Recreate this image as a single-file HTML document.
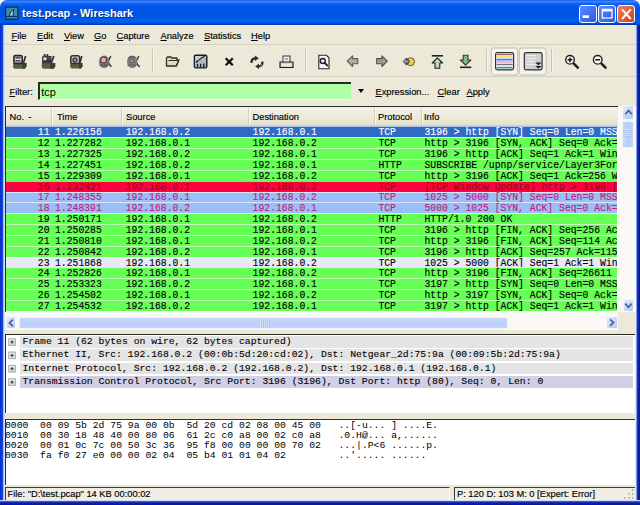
<!DOCTYPE html>
<html><head><meta charset="utf-8">
<style>
*{box-sizing:border-box}
html,body{margin:0;padding:0}
body{width:640px;height:505px;overflow:hidden;position:relative;background:#F4F4F4;font-family:"Liberation Sans",sans-serif;color:#000}
.a{position:absolute}
#title{left:0;top:0;width:640px;height:25px;background:linear-gradient(#1450D8 0,#3C8EFF 1.2px,#2A7CFF 2px,#0A60F4 4px,#0056E6 7px,#0052E0 14px,#005AE8 18px,#0062F0 21px,#0050DC 23px,#0034B8 25px);border-radius:7px 7px 0 0}
#ttext{left:22px;top:8px;color:#fff;font-weight:bold;font-size:11px;line-height:11px;white-space:nowrap;text-shadow:1px 1px 0 #0A2A8A}
.tb{top:5px;width:18px;height:18px;border:1px solid #fff;border-radius:3px}
#client{left:5px;top:25px;width:630px;height:475px;background:#ECE9D8}
.mt{top:30.3px;font-size:9.3px;line-height:12px;white-space:nowrap;-webkit-text-stroke:0.15px currentColor}
.u{text-decoration:underline;text-underline-offset:0.6px;text-decoration-thickness:1px}
.vsep{width:2px;border-left:1px solid #C8C5B6;border-right:1px solid #F6F5F0}
.mono{font-family:"Liberation Mono",monospace}
.prow{left:6px;width:611px;padding-top:0.95px;font-family:"Liberation Mono",monospace;font-size:9.76px;line-height:10.5px;-webkit-text-stroke:0.12px currentColor;white-space:pre;overflow:hidden}
.prow span{position:absolute;top:0.95px;transform:scaleY(1.15);transform-origin:0 1px}
.prow:before{content:"";position:absolute;left:0;right:0;top:0;height:1px;background:rgba(255,255,255,0.6)}
.hd{top:106px;height:19.5px;font-size:9.3px;line-height:12px;padding-top:5px;white-space:nowrap;-webkit-text-stroke:0.15px currentColor}
.drow{left:20px;width:613px;height:11.7px;padding-left:2.5px;font-family:"Liberation Mono",monospace;font-size:9.76px;line-height:12px;white-space:pre;overflow:hidden;-webkit-text-stroke:0.1px currentColor}
.exp{width:7.5px;height:7.5px;border:1px solid #9CA6BE;background:linear-gradient(135deg,#F8F8F4,#DCD8CC);}
.exp:before{content:"";position:absolute;left:1px;top:2.35px;width:3.5px;height:0.8px;background:#202020}
.exp:after{content:"";position:absolute;left:2.35px;top:1px;width:0.8px;height:3.5px;background:#202020}
.hex{left:5px;font-family:"Liberation Mono",monospace;font-size:9.76px;line-height:10.07px;white-space:pre}
.sbtn{background:linear-gradient(135deg,#E4ECFE,#C0D2F8 70%,#B4C8F4);border:1px solid #F2F6FF;border-radius:2px}
.sthumb{border:1px solid #EEF2FE;border-radius:2px}
</style></head><body>
<div class="a" style="left:0;top:8px;width:640px;height:497px;background:#0838D8"></div>
<div class="a" style="left:0;top:20px;width:5px;height:485px;background:linear-gradient(90deg,#0A2CC4 0,#0A3CDC 1.5px,#1448E0 2.6px,#90B4F2 3.4px,#D8E4F8 4.4px,#D8E4F8 5px)"></div>
<div class="a" style="left:635px;top:20px;width:5px;height:485px;background:linear-gradient(90deg,#E8F0FC 0,#C8D8F8 1.2px,#3050D0 1.9px,#1430B8 2.6px,#0A24A8 3.4px,#001890 5px)"></div>
<div class="a" style="left:0;top:500px;width:640px;height:5px;background:linear-gradient(#E0EEFA 0,#C0D0F4 0.8px,#3048C8 1.6px,#1424B0 2.6px,#001890 5px)"></div>
<div id="title" class="a"></div>
<div id="ttext" class="a">test.pcap - Wireshark</div>
<div class="a tb" style="left:579px;background:linear-gradient(135deg,#5A8AFF,#2A5AE8)"></div>
<div class="a tb" style="left:598px;background:linear-gradient(135deg,#5A8AFF,#2A5AE8)"></div>
<div class="a tb" style="left:617px;background:linear-gradient(135deg,#F08060,#D0401A)"></div>

<div id="client" class="a"></div>
<div class="a" style="left:4px;top:25px;width:632px;height:1px;background:#E4EEF8"></div>
<!-- menu -->
<div class="a" style="left:4px;top:44px;width:632px;height:1px;background:#D6D2C2"></div>
<div class="a mt" style="left:11.5px"><span class="u">F</span>ile</div>
<div class="a mt" style="left:37px"><span class="u">E</span>dit</div>
<div class="a mt" style="left:64px"><span class="u">V</span>iew</div>
<div class="a mt" style="left:94px"><span class="u">G</span>o</div>
<div class="a mt" style="left:116.5px"><span class="u">C</span>apture</div>
<div class="a mt" style="left:160.5px"><span class="u">A</span>nalyze</div>
<div class="a mt" style="left:204px"><span class="u">S</span>tatistics</div>
<div class="a mt" style="left:251px"><span class="u">H</span>elp</div>

<!-- toolbar -->
<div class="a" style="left:4px;top:76px;width:632px;height:1px;background:#D6D2C2"></div>
<div class="a vsep" style="left:152px;top:48.5px;height:23px"></div>
<div class="a vsep" style="left:304.5px;top:48.5px;height:23px"></div>
<div class="a vsep" style="left:485.5px;top:48.5px;height:23px"></div>
<div class="a vsep" style="left:550.5px;top:48.5px;height:23px"></div>

<svg class="a" style="left:0;top:0" width="640" height="80" viewBox="0 0 640 80">
<!-- title icon -->
<rect x="5.6" y="7.1" width="12.2" height="12.3" fill="#3A9096" stroke="#0A2C5C" stroke-width="1.2"/>
<path d="M9 16.2 Q10 11 13.8 9.4 Q12.8 12.2 13.4 16.2 Z" fill="#90C8F0" stroke="#0A2A5A" stroke-width="0.9"/>
<line x1="5.5" y1="16.5" x2="18" y2="16.5" stroke="#0A2A6A" stroke-width="0.9"/>
<line x1="7" y1="19.2" x2="16" y2="19.2" stroke="#0A2A6A" stroke-width="0.9"/>
<!-- 1 interfaces -->
<g>
<path d="M23.4 63.3 L25.6 56" stroke="#303030" stroke-width="1.7"/>
<path d="M13.2 63 H26.4 V66.5 L24.8 68.8 H14.6 L13.2 67.2 Z" fill="#55603A"/>
<path d="M22.6 63 H26.4 V66.5 L24.8 68.8 H22.6 Z" fill="#383F2A"/>
<rect x="13.9" y="55.6" width="8.3" height="7.8" rx="1.4" fill="#D8D8E0" stroke="#262630" stroke-width="1.6"/>
<path d="M15.4 57.9 H20.6 M15.4 60.9 H20.6" stroke="#262630" stroke-width="1.3"/>
</g>
<!-- 2 options -->
<g>
<path d="M51.2 63.3 L53.8 56" stroke="#303030" stroke-width="1.8"/>
<path d="M41.8 63 H55.2 V66.5 L53.6 68.8 H43.2 L41.8 67.2 Z" fill="#55603A"/>
<path d="M50.4 63 H55.2 V66.5 L53.6 68.8 H50.4 Z" fill="#383F2A"/>
<path d="M42 57.5 Q42 56 43.5 56 H51.5 V63.2 H42 Z" fill="#3A3A3A"/>
<rect x="43.4" y="57.4" width="3" height="2.8" fill="#E8E8E4"/>
<circle cx="44.6" cy="55.2" r="1.1" fill="#303030"/>
<circle cx="47.4" cy="55.2" r="1.1" fill="#303030"/>
<path d="M47.5 58 H50.5" stroke="#707070" stroke-width="1"/>
</g>
<!-- 3 start -->
<g>
<path d="M79.8 63.3 L81.8 56" stroke="#303030" stroke-width="1.7"/>
<path d="M70.2 63 H82.4 V66.5 L80.8 68.6 H71.6 L70.2 67.2 Z" fill="#55603A"/>
<path d="M79 63 H82.4 V66.5 L80.8 68.6 H79 Z" fill="#383F2A"/>
<rect x="70.8" y="55.7" width="8.8" height="7.8" rx="2" fill="#DCDCDC" stroke="#303030" stroke-width="1.6"/>
<circle cx="75" cy="60" r="2.2" fill="#8A8A8A" stroke="#303030" stroke-width="1.1"/>
</g>
<!-- 4 stop -->
<g>
<path d="M107.6 62.5 L110.8 56.2 M107.8 62.3 L111.4 66.8" stroke="#404040" stroke-width="1.6"/>
<ellipse cx="104.2" cy="61.8" rx="5.2" ry="6.3" fill="#767274"/>
<circle cx="103.6" cy="60" r="3" fill="#C8B4BA" stroke="#5A2A34" stroke-width="1"/>
<path d="M99.5 65.2 H108.4" stroke="#5A5A5A" stroke-width="1.3"/>
</g>
<!-- 5 restart -->
<g>
<path d="M135.6 62.5 L138.8 56.2 M135.8 62.3 L139.6 67" stroke="#484848" stroke-width="1.6"/>
<ellipse cx="132.2" cy="61.8" rx="5.2" ry="6.3" fill="#7C7C7C"/>
<path d="M128.5 58 Q131 55.5 135.2 57.5" stroke="#555" stroke-width="1.3" fill="none"/>
<circle cx="131.5" cy="61" r="1.9" fill="#9A9C92" stroke="#555" stroke-width="0.9"/>
<path d="M127.5 65.2 H136.4" stroke="#606060" stroke-width="1.2"/>
</g>
<!-- open folder -->
<g>
<path d="M166.5 58 L167.5 57 H171 L172 58 H177 V60 H179 L176.5 66 H166.5 Z" fill="#DCDCB8" stroke="#303028" stroke-width="1.3" stroke-linejoin="round"/>
<path d="M168.5 60.5 H178.5 L176 66" fill="none" stroke="#303028" stroke-width="1"/>
</g>
<!-- save -->
<g>
<defs><linearGradient id="sg" x1="0" y1="0" x2="1" y2="1"><stop offset="0" stop-color="#D8DCE0"/><stop offset="1" stop-color="#8AA4C8"/></linearGradient></defs>
<rect x="194.4" y="55.3" width="12.4" height="12.6" rx="1.3" fill="url(#sg)" stroke="#1A1A1A" stroke-width="1.4"/>
<path d="M196.2 62.2 L204.8 56.2" stroke="#1A1A1A" stroke-width="1.7"/>
<path d="M197.8 61.6 L205.6 56.6" stroke="#E8D070" stroke-width="0.9"/>
<path d="M197.5 63.8 V67 M200.6 63.8 V67 M203.7 63.8 V67" stroke="#1A1A1A" stroke-width="1.3"/>
</g>
<!-- close X -->
<path d="M225.7 58.3 L232.8 65.2 M232.8 58.3 L225.7 65.2" stroke="#101010" stroke-width="2.3"/>
<!-- reload -->
<g fill="none" stroke="#2E2E2E" stroke-width="2.4">
<path d="M251.6 62.8 Q251.2 58.6 255.6 58.2"/>
<path d="M262.4 61.6 Q262.8 66 258.4 66.4"/>
</g>
<path d="M255 55.6 L258.8 58.2 L255 61 Z" fill="#2E2E2E"/>
<path d="M259 63.6 L255.2 66.4 L259 69 Z" fill="#2E2E2E"/>
<circle cx="261.2" cy="65" r="0.9" fill="#7A9A60"/>
<!-- print -->
<g>
<rect x="283" y="56" width="7" height="6.5" fill="#F4F4F0" stroke="#303030" stroke-width="1"/>
<path d="M285 58 L288 60 M288 58 L285 60" stroke="#606060" stroke-width="0.6"/>
<path d="M280 62 H293 V67.5 H280 Z" fill="#D4D4D0" stroke="#202020" stroke-width="1.2" stroke-linejoin="round"/>
<rect x="281.5" y="64.3" width="10" height="1.2" fill="#FAFAFA"/>
</g>
<!-- find -->
<g>
<path d="M318.8 55.3 H326.5 L329 57.8 V68.8 H318.8 Z" fill="#F6F6F8" stroke="#282828" stroke-width="1.1"/>
<circle cx="322.8" cy="61" r="2.5" fill="#E8EEF4" stroke="#202020" stroke-width="1.4"/>
<path d="M324.6 62.8 L327.8 66" stroke="#202020" stroke-width="1.8"/>
</g>
<!-- back -->
<path d="M347.2 61.2 L352.6 55.9 V58.6 H357.8 V63.8 H352.6 V66.5 Z" fill="#A8B0A4" stroke="#585A54" stroke-width="1.1" stroke-linejoin="round"/>
<!-- forward -->
<path d="M387.3 61.2 L381.9 55.9 V58.6 H376.7 V63.8 H381.9 V66.5 Z" fill="#98A094" stroke="#505250" stroke-width="1.1" stroke-linejoin="round"/>
<!-- goto -->
<g>
<circle cx="410.5" cy="61.7" r="4" fill="#F0D040" stroke="#4A4A30" stroke-width="0.9"/>
<path d="M403.2 61.5 L406.5 58 V60 H409 V63 H406.5 V65 Z" fill="#8AA0B8" stroke="#2A2A2A" stroke-width="0.9"/>
</g>
<!-- top -->
<g>
<rect x="431.8" y="55" width="11.2" height="1.6" fill="#202020"/>
<path d="M437.4 57.8 L442.6 63 H439.8 V68.2 H435 V63 H432.2 Z" fill="#B8D8B8" stroke="#202020" stroke-width="1.1" stroke-linejoin="round"/>
</g>
<!-- bottom -->
<g>
<rect x="460" y="66.5" width="11.2" height="1.6" fill="#202020"/>
<path d="M465.6 65.2 L470.8 60 H468 V55.2 H463.2 V60 H460.4 Z" fill="#88B888" stroke="#303830" stroke-width="1.1" stroke-linejoin="round"/>
</g>
<!-- pressed buttons -->
<rect x="491.3" y="48" width="26.4" height="27" rx="2.5" fill="#F4F3EE" stroke="#C2BEAC" stroke-width="1"/>
<rect x="519.3" y="48" width="26.8" height="27" rx="2.5" fill="#F4F3EE" stroke="#C2BEAC" stroke-width="1"/>
<!-- colorize -->
<g>
<rect x="495.6" y="52.6" width="18" height="17.3" rx="1.8" fill="#F6F6F6" stroke="#303030" stroke-width="1.2"/>
<rect x="496.6" y="54.2" width="16" height="0.9" fill="#8A3A3A"/>
<rect x="496.6" y="55.6" width="16" height="1.5" fill="#F2E27A"/>
<rect x="496.6" y="57.5" width="16" height="1.3" fill="#B4D8FF"/>
<rect x="496.6" y="59.2" width="16" height="0.8" fill="#50507A"/>
<rect x="496.6" y="60.3" width="16" height="1.4" fill="#8CB0F6"/>
<rect x="496.6" y="62.1" width="16" height="1.6" fill="#F8B4E0"/>
<rect x="496.6" y="64.1" width="16" height="0.8" fill="#704060"/>
<rect x="496.6" y="65.3" width="16" height="1.5" fill="#A8F4F4"/>
<rect x="496.6" y="67.2" width="16" height="1.2" fill="#407070"/>
</g>
<!-- autoscroll -->
<g>
<rect x="524.3" y="52.6" width="17.8" height="17.3" rx="1.8" fill="#D0D0D0" stroke="#303030" stroke-width="1.2"/>
<rect x="526.5" y="55.2" width="9.5" height="0.9" fill="#F4F4F4"/>
<rect x="526.5" y="58.2" width="9.5" height="0.9" fill="#F4F4F4"/>
<rect x="526.5" y="61.2" width="9.5" height="0.9" fill="#F4F4F4"/>
<rect x="526.5" y="64.2" width="9.5" height="0.9" fill="#F4F4F4"/>
<path d="M535.2 62.6 H541.6 L538.4 65.2 Z M535.2 65.9 H541.6 L538.4 68.6 Z" fill="#1A1A1A"/>
</g>
<!-- zoom in -->
<g>
<path d="M573.8 63.6 L577.8 67.6" stroke="#202020" stroke-width="2.6" stroke-linecap="round"/>
<circle cx="570" cy="59.8" r="4.3" fill="#FAFAFA" stroke="#202020" stroke-width="1.4"/>
<path d="M567.6 59.8 H572.4 M570 57.4 V62.2" stroke="#101010" stroke-width="1.5"/>
</g>
<!-- zoom out -->
<g>
<path d="M601.5 63.6 L605.5 67.6" stroke="#202020" stroke-width="2.6" stroke-linecap="round"/>
<circle cx="597.7" cy="59.8" r="4.3" fill="#FAFAFA" stroke="#202020" stroke-width="1.4"/>
<path d="M595.3 59.8 H600.1" stroke="#101010" stroke-width="1.5"/>
</g>
<!-- title buttons glyphs -->
<rect x="582.6" y="15.3" width="6.4" height="2.7" fill="#FFFFFF"/>
<rect x="602.3" y="9.3" width="9.7" height="8.7" fill="none" stroke="#FFFFFF" stroke-width="1.2"/>
<rect x="602.3" y="9.3" width="9.7" height="2.2" fill="#FFFFFF"/>
<path d="M622 9.4 L630.8 19 M630.8 9.4 L622 19" stroke="#FFFFFF" stroke-width="2.1"/>
</svg>

<!-- filter -->
<div class="a mt" style="top:86.2px;left:9.5px"><span class="u">F</span>ilter:</div>
<div class="a" style="left:37.5px;top:81.5px;width:313px;height:18.5px;background:#AFFFA5;border-top:2px solid #2A2A20;border-left:2px solid #2A2A20;border-bottom:1px solid #F4F2EA"></div>
<div class="a mt" style="top:86.2px;left:41.2px;font-size:10.9px;-webkit-text-stroke:0">tcp</div>
<div class="a" style="left:358px;top:89px;width:0;height:0;border-left:3.5px solid transparent;border-right:3.5px solid transparent;border-top:4px solid #000"></div>
<div class="a mt" style="top:86.2px;left:375.5px"><span class="u">E</span>xpression...</div>
<div class="a mt" style="top:86.2px;left:437.5px"><span class="u">C</span>lear</div>
<div class="a mt" style="top:86.2px;left:466.5px"><span class="u">A</span>pply</div>

<!-- packet list -->
<div class="a" style="left:5px;top:106px;width:613px;height:206px;background:#fff;border-top:1px solid #2A2A20;border-left:1px solid #2A2A20"></div>
<div class="a" style="left:6px;top:107px;width:612px;height:20px;background:linear-gradient(#F3F1E8,#ECE9D8 60%,#E2DECB)"></div>
<div class="a" style="left:6px;top:125px;width:612px;height:2px;background:#D6D1BC"></div>
<div class="a" style="left:50.5px;top:108px;width:1px;height:17px;background:#D2CEBC"></div><div class="a" style="left:51.5px;top:108px;width:1px;height:17px;background:#FAF9F4"></div>
<div class="a" style="left:121.0px;top:108px;width:1px;height:17px;background:#D2CEBC"></div><div class="a" style="left:122.0px;top:108px;width:1px;height:17px;background:#FAF9F4"></div>
<div class="a" style="left:247.5px;top:108px;width:1px;height:17px;background:#D2CEBC"></div><div class="a" style="left:248.5px;top:108px;width:1px;height:17px;background:#FAF9F4"></div>
<div class="a" style="left:373.5px;top:108px;width:1px;height:17px;background:#D2CEBC"></div><div class="a" style="left:374.5px;top:108px;width:1px;height:17px;background:#FAF9F4"></div>
<div class="a" style="left:420.5px;top:108px;width:1px;height:17px;background:#D2CEBC"></div><div class="a" style="left:421.5px;top:108px;width:1px;height:17px;background:#FAF9F4"></div>
<div class="a hd" style="left:9.5px">No.</div>
<div class="a hd" style="left:28.3px">-</div>
<div class="a hd" style="left:57px">Time</div>
<div class="a hd" style="left:126px">Source</div>
<div class="a hd" style="left:252.5px">Destination</div>
<div class="a hd" style="left:378px">Protocol</div>
<div class="a hd" style="left:424px">Info</div>
<div class="a prow" style="top:126.40px;height:10.9px;background:#316AC5;color:#FFFFFF"><span style="right:567.50px">11</span><span style="left:49.00px">1.226156</span><span style="left:119.70px">192.168.0.2</span><span style="left:246.60px">192.168.0.1</span><span style="left:372.40px">TCP</span><span class="info" style="left:418.50px">3196 &gt; http [SYN] Seq=0 Len=0 MSS=1460</span></div>
<div class="a prow" style="top:137.25px;height:10.9px;background:#66FF55;color:#000000"><span style="right:567.50px">12</span><span style="left:49.00px">1.227282</span><span style="left:119.70px">192.168.0.1</span><span style="left:246.60px">192.168.0.2</span><span style="left:372.40px">TCP</span><span class="info" style="left:418.50px">http &gt; 3196 [SYN, ACK] Seq=0 Ack=1 Win</span></div>
<div class="a prow" style="top:148.10px;height:10.9px;background:#66FF55;color:#000000"><span style="right:567.50px">13</span><span style="left:49.00px">1.227325</span><span style="left:119.70px">192.168.0.2</span><span style="left:246.60px">192.168.0.1</span><span style="left:372.40px">TCP</span><span class="info" style="left:418.50px">3196 &gt; http [ACK] Seq=1 Ack=1 Win=1752</span></div>
<div class="a prow" style="top:158.95px;height:10.9px;background:#66FF55;color:#000000"><span style="right:567.50px">14</span><span style="left:49.00px">1.227451</span><span style="left:119.70px">192.168.0.2</span><span style="left:246.60px">192.168.0.1</span><span style="left:372.40px">HTTP</span><span class="info" style="left:418.50px">SUBSCRIBE /upnp/service/Layer3Forwarding</span></div>
<div class="a prow" style="top:169.80px;height:10.9px;background:#66FF55;color:#000000"><span style="right:567.50px">15</span><span style="left:49.00px">1.229309</span><span style="left:119.70px">192.168.0.1</span><span style="left:246.60px">192.168.0.2</span><span style="left:372.40px">TCP</span><span class="info" style="left:418.50px">http &gt; 3196 [ACK] Seq=1 Ack=256 Win=5</span></div>
<div class="a prow" style="top:180.65px;height:10.9px;background:#FF0040;color:#8A1010"><span style="right:567.50px">16</span><span style="left:49.00px">1.232421</span><span style="left:119.70px">192.168.0.1</span><span style="left:246.60px">192.168.0.2</span><span style="left:372.40px">TCP</span><span class="info" style="left:418.50px">[TCP Window Update] http &gt; 3196 [ACK]</span></div>
<div class="a prow" style="top:191.50px;height:10.9px;background:#9CBEF7;color:#C0207A"><span style="right:567.50px">17</span><span style="left:49.00px">1.248355</span><span style="left:119.70px">192.168.0.1</span><span style="left:246.60px">192.168.0.2</span><span style="left:372.40px">TCP</span><span class="info" style="left:418.50px">1025 &gt; 5000 [SYN] Seq=0 Len=0 MSS=1460</span></div>
<div class="a prow" style="top:202.35px;height:10.9px;background:#9CBEF7;color:#C0207A"><span style="right:567.50px">18</span><span style="left:49.00px">1.248391</span><span style="left:119.70px">192.168.0.2</span><span style="left:246.60px">192.168.0.1</span><span style="left:372.40px">TCP</span><span class="info" style="left:418.50px">5000 &gt; 1025 [SYN, ACK] Seq=0 Ack=1 Win</span></div>
<div class="a prow" style="top:213.20px;height:10.9px;background:#66FF55;color:#000000"><span style="right:567.50px">19</span><span style="left:49.00px">1.250171</span><span style="left:119.70px">192.168.0.1</span><span style="left:246.60px">192.168.0.2</span><span style="left:372.40px">HTTP</span><span class="info" style="left:418.50px">HTTP/1.0 200 OK</span></div>
<div class="a prow" style="top:224.05px;height:10.9px;background:#66FF55;color:#000000"><span style="right:567.50px">20</span><span style="left:49.00px">1.250285</span><span style="left:119.70px">192.168.0.2</span><span style="left:246.60px">192.168.0.1</span><span style="left:372.40px">TCP</span><span class="info" style="left:418.50px">3196 &gt; http [FIN, ACK] Seq=256 Ack=114</span></div>
<div class="a prow" style="top:234.90px;height:10.9px;background:#66FF55;color:#000000"><span style="right:567.50px">21</span><span style="left:49.00px">1.250810</span><span style="left:119.70px">192.168.0.1</span><span style="left:246.60px">192.168.0.2</span><span style="left:372.40px">TCP</span><span class="info" style="left:418.50px">http &gt; 3196 [FIN, ACK] Seq=114 Ack=257</span></div>
<div class="a prow" style="top:245.75px;height:10.9px;background:#66FF55;color:#000000"><span style="right:567.50px">22</span><span style="left:49.00px">1.250842</span><span style="left:119.70px">192.168.0.2</span><span style="left:246.60px">192.168.0.1</span><span style="left:372.40px">TCP</span><span class="info" style="left:418.50px">3196 &gt; http [ACK] Seq=257 Ack=115 Win</span></div>
<div class="a prow" style="top:256.60px;height:10.9px;background:#E8E8F6;color:#000000"><span style="right:567.50px">23</span><span style="left:49.00px">1.251868</span><span style="left:119.70px">192.168.0.1</span><span style="left:246.60px">192.168.0.2</span><span style="left:372.40px">TCP</span><span class="info" style="left:418.50px">1025 &gt; 5000 [ACK] Seq=1 Ack=1 Win=5840</span></div>
<div class="a prow" style="top:267.45px;height:10.9px;background:#66FF55;color:#000000"><span style="right:567.50px">24</span><span style="left:49.00px">1.252826</span><span style="left:119.70px">192.168.0.1</span><span style="left:246.60px">192.168.0.2</span><span style="left:372.40px">TCP</span><span class="info" style="left:418.50px">http &gt; 3196 [FIN, ACK] Seq=26611 Ack=2</span></div>
<div class="a prow" style="top:278.30px;height:10.9px;background:#66FF55;color:#000000"><span style="right:567.50px">25</span><span style="left:49.00px">1.253323</span><span style="left:119.70px">192.168.0.2</span><span style="left:246.60px">192.168.0.1</span><span style="left:372.40px">TCP</span><span class="info" style="left:418.50px">3197 &gt; http [SYN] Seq=0 Len=0 MSS=1460</span></div>
<div class="a prow" style="top:289.15px;height:10.9px;background:#66FF55;color:#000000"><span style="right:567.50px">26</span><span style="left:49.00px">1.254502</span><span style="left:119.70px">192.168.0.1</span><span style="left:246.60px">192.168.0.2</span><span style="left:372.40px">TCP</span><span class="info" style="left:418.50px">http &gt; 3197 [SYN, ACK] Seq=0 Ack=1 Win</span></div>
<div class="a prow" style="top:300.00px;height:10.9px;background:#66FF55;color:#000000"><span style="right:567.50px">27</span><span style="left:49.00px">1.254532</span><span style="left:119.70px">192.168.0.2</span><span style="left:246.60px">192.168.0.1</span><span style="left:372.40px">TCP</span><span class="info" style="left:418.50px">3197 &gt; http [ACK] Seq=1 Ack=1 Win=1752</span></div>

<!-- vscroll -->
<div class="a" style="left:617.5px;top:105.5px;width:18.5px;height:207px;background:#FAF9F5"></div>
<div class="a sbtn" style="left:622.3px;top:105px;width:12px;height:14.6px"></div>
<div class="a sthumb" style="left:622.3px;top:120.7px;width:12px;height:27.8px;background:linear-gradient(90deg,#C4D4FB,#B8CCF8 60%,#C8D6FA)"></div>
<div class="a sbtn" style="left:622.8px;top:299.4px;width:11px;height:12.5px"></div>
<!-- hscroll -->
<div class="a" style="left:5px;top:312px;width:613px;height:21.5px;background:#FAF9F5"></div>
<div class="a" style="left:5px;top:330px;width:631px;height:3.5px;background:#ECE9D8"></div>
<div class="a" style="left:617.5px;top:312px;width:18.5px;height:21.5px;background:#ECE9D8"></div>
<div class="a sbtn" style="left:5.6px;top:316.3px;width:10.7px;height:13px"></div>
<div class="a sthumb" style="left:19px;top:316.8px;width:488.5px;height:12.2px;background:linear-gradient(#C8D8FC,#BCD0FA 60%,#C4D4FA)"></div>
<div class="a sbtn" style="left:606px;top:316.2px;width:11.5px;height:12.6px"></div>
<svg class="a" style="left:0;top:100px" width="640" height="235" viewBox="0 100 640 235">
<g fill="none" stroke="#4D6185" stroke-width="1.7" stroke-linejoin="miter">
<path d="M625.3 114.2 L628.6 110.6 L631.9 114.2"/>
<path d="M625.2 303.6 L628.4 307.2 L631.6 303.6"/>
<path d="M12.8 319.6 L9.4 322.9 L12.8 326.2"/>
<path d="M610 319.4 L613.4 322.6 L610 325.8"/>
</g>
<g stroke="#EEF3FF" stroke-width="0.8">
<path d="M626 129.5 H631 M626 131.5 H631 M626 133.5 H631 M626 135.5 H631"/>
<path d="M260.5 319.8 V327 M262.5 319.8 V327 M264.5 319.8 V327 M266.5 319.8 V327 M268.5 319.8 V327"/>
</g>
<g stroke="#9AB0DC" stroke-width="0.6">
<path d="M626.5 130.2 H631.5 M626.5 132.2 H631.5 M626.5 134.2 H631.5 M626.5 136.2 H631.5"/>
<path d="M261.2 320 V327.4 M263.2 320 V327.4 M265.2 320 V327.4 M267.2 320 V327.4 M269.2 320 V327.4"/>
</g>
</svg>

<!-- detail pane -->
<div class="a" style="left:5px;top:334px;width:630px;height:79px;background:#fff;border-top:1px solid #2A2A20;border-left:1px solid #2A2A20"></div>
<div class="a drow" style="top:336.00px;background:#E4E4E4">Frame 11 (62 bytes on wire, 62 bytes captured)</div>
<div class="a drow" style="top:349.37px;background:#E4E4E4">Ethernet II, Src: 192.168.0.2 (00:0b:5d:20:cd:02), Dst: Netgear_2d:75:9a (00:09:5b:2d:75:9a)</div>
<div class="a drow" style="top:362.74px;background:#E4E4E4">Internet Protocol, Src: 192.168.0.2 (192.168.0.2), Dst: 192.168.0.1 (192.168.0.1)</div>
<div class="a drow" style="top:376.11px;background:#CFCFE6">Transmission Control Protocol, Src Port: 3196 (3196), Dst Port: http (80), Seq: 0, Len: 0</div>

<svg class="a" style="left:0;top:330px" width="30" height="70" viewBox="0 330 30 70">
<defs><linearGradient id="eg" x1="0" y1="0" x2="1" y2="1"><stop offset="0" stop-color="#FAFAF6"/><stop offset="1" stop-color="#D8D4C6"/></linearGradient></defs>
<rect x="8.7" y="338.70" width="6.6" height="6.6" fill="url(#eg)" stroke="#A0AAC0" stroke-width="1"/>
<path d="M10.3 342.00 H13.7 M12 340.30 V343.70" stroke="#222" stroke-width="0.9"/>
<rect x="8.7" y="352.07" width="6.6" height="6.6" fill="url(#eg)" stroke="#A0AAC0" stroke-width="1"/>
<path d="M10.3 355.37 H13.7 M12 353.67 V357.07" stroke="#222" stroke-width="0.9"/>
<rect x="8.7" y="365.44" width="6.6" height="6.6" fill="url(#eg)" stroke="#A0AAC0" stroke-width="1"/>
<path d="M10.3 368.74 H13.7 M12 367.04 V370.44" stroke="#222" stroke-width="0.9"/>
<rect x="8.7" y="378.81" width="6.6" height="6.6" fill="url(#eg)" stroke="#A0AAC0" stroke-width="1"/>
<path d="M10.3 382.11 H13.7 M12 380.41 V383.81" stroke="#222" stroke-width="0.9"/>
</svg>
<!-- hex pane -->
<div class="a" style="left:5px;top:419px;width:630px;height:65.5px;background:#fff;border-top:1.5px solid #34322A;border-left:1px solid #2A2A20"></div>
<div class="a hex" style="top:420.6px">0000  00 09 5b 2d 75 9a 00 0b  5d 20 cd 02 08 00 45 00   ..[-u... ] ....E.
0010  00 30 18 48 40 00 80 06  61 2c c0 a8 00 02 c0 a8   .0.H@... a,......
0020  00 01 0c 7c 00 50 3c 36  95 f8 00 00 00 00 70 02   ...|.P&lt;6 ......p.
0030  fa f0 27 e0 00 00 02 04  05 b4 01 01 04 02         ..'..... ......</div>

<!-- status bar -->
<div class="a" style="left:5px;top:487.2px;width:444.5px;height:13px;background:#F0EEE4;border-top:1px solid #3E3C30;border-left:1px solid #3E3C30;border-right:1px solid #fff"></div>
<div class="a mt" style="top:487.5px;left:7.5px">File: "D:\test.pcap" 14 KB 00:00:02</div>
<div class="a" style="left:454px;top:487.2px;width:181px;height:13px;background:#F0EEE4;border-top:1px solid #3E3C30;border-left:1px solid #3E3C30"></div>
<div class="a mt" style="top:487.5px;left:457px">P: 120 D: 103 M: 0 [Expert: Error]</div>
<svg class="a" style="left:0;top:480px" width="640" height="25" viewBox="0 480 640 25"><rect x="632" y="497" width="1.5" height="1.5" fill="#A8A694"/><rect x="628" y="497" width="1.5" height="1.5" fill="#A8A694"/><rect x="624" y="497" width="1.5" height="1.5" fill="#A8A694"/><rect x="632" y="493" width="1.5" height="1.5" fill="#A8A694"/><rect x="628" y="493" width="1.5" height="1.5" fill="#A8A694"/><rect x="632" y="489" width="1.5" height="1.5" fill="#A8A694"/></svg>
</body></html>
